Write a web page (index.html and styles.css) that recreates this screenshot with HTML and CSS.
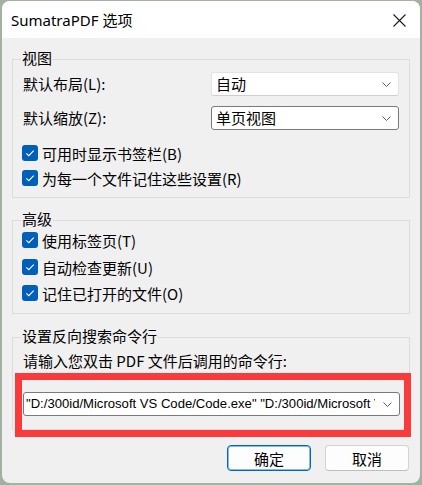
FILE: index.html
```html
<!DOCTYPE html>
<html lang="zh-CN">
<head>
<meta charset="utf-8">
<title>SumatraPDF 选项</title>
<link rel="stylesheet" href="styles.css">
</head>
<body>
<div class="window">
  <div class="titlebar">
    <span class="title">SumatraPDF 选项</span>
    <svg class="close" width="13" height="13" viewBox="0 0 13 13"><path d="M0.5 0.5 L12.5 12.5 M12.5 0.5 L0.5 12.5" stroke="#1b1b1b" stroke-width="1.1" fill="none"/></svg>
  </div>
  <div class="content">
    <div class="group g1">
      <div class="group-title">视图</div>
      <div class="field-row r1">
        <span class="label">默认布局(L):</span>
        <div class="select light"><span class="select-text">自动</span><svg class="chev" width="9" height="5" viewBox="0 0 9 5"><path d="M0.5 0.5 L4.5 4.5 L8.5 0.5" stroke="#5f5f5f" stroke-width="1" fill="none"/></svg></div>
      </div>
      <div class="field-row r2">
        <span class="label">默认缩放(Z):</span>
        <div class="select dark"><span class="select-text">单页视图</span><svg class="chev" width="9" height="5" viewBox="0 0 9 5"><path d="M0.5 0.5 L4.5 4.5 L8.5 0.5" stroke="#5f5f5f" stroke-width="1" fill="none"/></svg></div>
      </div>
      <div class="check c1"><span class="box"><svg width="16" height="16" viewBox="0 0 16 16"><path d="M4.3 8.3 L6.8 10.7 L11.7 5.6" stroke="#fff" stroke-width="1.1" fill="none"/></svg></span><span>可用时显示书签栏(B)</span></div>
      <div class="check c2"><span class="box"><svg width="16" height="16" viewBox="0 0 16 16"><path d="M4.3 8.3 L6.8 10.7 L11.7 5.6" stroke="#fff" stroke-width="1.1" fill="none"/></svg></span><span>为每一个文件记住这些设置(R)</span></div>
    </div>

    <div class="group g2">
      <div class="group-title">高级</div>
      <div class="check c3"><span class="box"><svg width="16" height="16" viewBox="0 0 16 16"><path d="M4.3 8.3 L6.8 10.7 L11.7 5.6" stroke="#fff" stroke-width="1.1" fill="none"/></svg></span><span>使用标签页(T)</span></div>
      <div class="check c4"><span class="box"><svg width="16" height="16" viewBox="0 0 16 16"><path d="M4.3 8.3 L6.8 10.7 L11.7 5.6" stroke="#fff" stroke-width="1.1" fill="none"/></svg></span><span>自动检查更新(U)</span></div>
      <div class="check c5"><span class="box"><svg width="16" height="16" viewBox="0 0 16 16"><path d="M4.3 8.3 L6.8 10.7 L11.7 5.6" stroke="#fff" stroke-width="1.1" fill="none"/></svg></span><span>记住已打开的文件(O)</span></div>
    </div>

    <div class="group g3">
      <div class="group-title">设置反向搜索命令行</div>
      <div class="hint">请输入您双击 PDF 文件后调用的命令行:</div>
      <div class="select dark wide"><span class="select-text cmd">"D:/300id/Microsoft VS Code/Code.exe" "D:/300id/Microsoft VS Code/resources/app/out/cli.js"</span><svg class="chev" width="9" height="5" viewBox="0 0 9 5"><path d="M0.5 0.5 L4.5 4.5 L8.5 0.5" stroke="#5f5f5f" stroke-width="1" fill="none"/></svg></div>
    </div>

    <div class="buttons">
      <button class="btn primary">确定</button>
      <button class="btn">取消</button>
    </div>
  </div>
  <div class="highlight"></div>
</div>
</body>
</html>
```
FILE: styles.css
```css
* { box-sizing: border-box; }
html, body { margin: 0; padding: 0; }
body {
  width: 422px;
  height: 485px;
  overflow: hidden;
  background: #a3b1a3;
  font-family: "Noto Sans CJK SC", "Noto Sans", sans-serif;
  font-size: 15px;
  color: #000;
}
.window {
  position: relative;
  margin: 1px 0 0 2px;
  width: 418px;
  height: 482px;
  background: #f0f0f0;
  border-radius: 8px;
  overflow: hidden;
}
.titlebar {
  height: 37px;
  background: #fff;
  display: flex;
  align-items: center;
  justify-content: space-between;
  padding: 0 14px 0 9px;
}
.title {
  font-family: "Noto Sans", "Noto Sans CJK SC", sans-serif;
  font-size: 15px;
  line-height: 20px;
  margin-top: 1px;
}
.close { display: block; margin-top: 1px; }
.content {
  padding: 0 10px;
}
.group {
  border: 1px solid #dcdcdc;
  padding: 0 10px;
}
.group-title {
  width: fit-content;
  margin: -11px 0 0 -2px;
  padding: 0 1px;
  line-height: 17px;
  height: 17px;
  background: #f0f0f0;
}
.g1 { margin-top: 21px; padding-bottom: 9px; }
.g2 { margin-top: 22px; padding-bottom: 10px; }
.g3 { margin-top: 23px; padding-bottom: 13px; }

.field-row {
  display: flex;
  align-items: center;
  justify-content: space-between;
  height: 24px;
}
.r1 { margin-top: 6px; }
.r2 { margin-top: 10px; }
.label { line-height: 20px; }
.select {
  display: flex;
  align-items: center;
  justify-content: space-between;
  width: 188px;
  height: 24px;
  background: #fff;
  border-radius: 3px;
  padding: 0 7px 0 4px;
}
.select.light { border: 1px solid #e3e3e3; border-bottom-color: #cfcfcf; }
.select.dark { border: 1px solid #7a7a7a; }
.select-text { line-height: 20px; white-space: nowrap; }
.chev { display: block; flex: none; }
.select.wide {
  width: 377px;
  margin-top: 21px;
  padding-left: 2px;
}
.cmd {
  font-family: "Liberation Sans", sans-serif;
  font-size: 13.1px;
  overflow: hidden;
  width: 349px;
}

.check {
  display: flex;
  align-items: center;
  height: 20px;
  margin-left: -1px;
}
.box {
  width: 16px;
  height: 16px;
  border-radius: 3px;
  background: #005fb8;
  margin-right: 4px;
  flex: none;
}
.box svg { display: block; }
.c1 { margin-top: 13px; }
.c2 { margin-top: 5px; }
.c3 { margin-top: 3px; }
.c4 { margin-top: 7px; }
.c5 { margin-top: 6px; }

.hint { margin-top: 7px; line-height: 20px; }

.buttons {
  display: flex;
  justify-content: flex-end;
  gap: 14px;
  margin-top: 15px;
  padding-right: 1px;
}
.btn {
  width: 84px;
  height: 26px;
  background: #fdfdfd;
  border: 1px solid #d3d3d3;
  border-bottom-color: #bdbdbd;
  border-radius: 4px;
  font-family: "Noto Sans CJK SC", sans-serif;
  font-size: 15px;
  color: #000;
  padding: 0;
}
.btn.primary {
  border: 1px solid #0067c0;
  box-shadow: inset 0 0 0 1px rgba(0, 103, 192, 0.45);
}
.highlight {
  position: absolute;
  left: 13px;
  top: 372px;
  width: 396px;
  height: 64px;
  border: 7px solid #fa3b3b;
}
```
